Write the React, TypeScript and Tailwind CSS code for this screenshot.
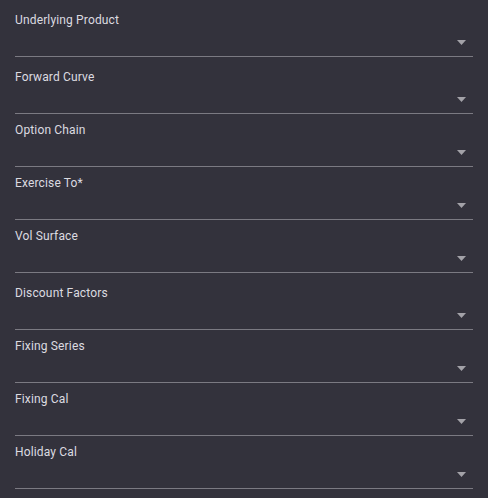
const FIELDS = [
  { label: "Underlying Product", gap: "mb-[12px]" },
  { label: "Forward Curve", gap: "mb-[8px]" },
  { label: "Option Chain", gap: "mb-[8px]" },
  { label: "Exercise To*", gap: "mb-[8px]" },
  { label: "Vol Surface", gap: "mb-[12px]" },
  { label: "Discount Factors", gap: "mb-[8px]" },
  { label: "Fixing Series", gap: "mb-[8px]" },
  { label: "Fixing Cal", gap: "mb-[8px]" },
  { label: "Holiday Cal", gap: "mb-[8px]" },
];

function Field({ label, gap }: { label: string; gap: string }) {
  return (
    <div className={gap}>
      <div className="text-[12px] leading-[16px] tracking-[0.15px] text-[#dcdbe0]">{label}</div>
      <div className="h-[29px] flex items-end justify-end border-b border-[#7b7a82] pb-[11px] pr-[7px]">
        <svg width="9" height="5" viewBox="0 0 9 5">
          <path d="M0 0 L9 0 L4.5 5 Z" fill="#a3a2a8" />
        </svg>
      </div>
    </div>
  );
}

export default function App() {
  return (
    <div
      className="min-h-screen bg-[#33323c] pt-[12px] pl-[15px] pr-[15px]"
      style={{ fontFamily: "Roboto, 'Liberation Sans', sans-serif" }}
    >
      {FIELDS.map((f) => (
        <Field key={f.label} label={f.label} gap={f.gap} />
      ))}
    </div>
  );
}
